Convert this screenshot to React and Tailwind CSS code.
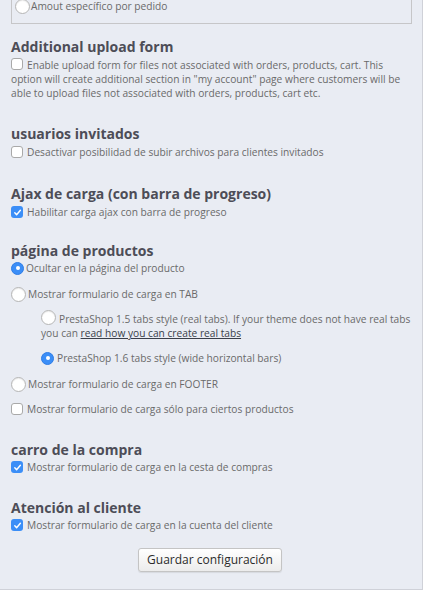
import React from "react";

const Radio = ({ checked }) =>
  checked ? (
    <span className="inline-flex flex-none w-[13px] h-[13px] rounded-full bg-[#3b8ef7] border border-[#2f7de6] items-center justify-center">
      <span className="w-[4px] h-[4px] rounded-full bg-white" />
    </span>
  ) : (
    <span className="inline-block flex-none w-[15px] h-[15px] rounded-full bg-white border border-[#b5b5b5] shadow-[inset_0_1px_1px_rgba(0,0,0,0.08)]" />
  );

const Checkbox = ({ checked }) =>
  checked ? (
    <span className="inline-flex flex-none w-[12px] h-[12px] rounded-[3px] bg-[#3b8ef7] items-center justify-center">
      <svg width="9" height="9" viewBox="0 0 10 10">
        <path d="M2 5.3l2 2.1L8.2 2.6" fill="none" stroke="white" strokeWidth="1.6" strokeLinecap="round" strokeLinejoin="round" />
      </svg>
    </span>
  ) : (
    <span className="inline-block flex-none w-[12px] h-[12px] rounded-[3px] bg-white border border-[#a9a9a9]" />
  );

const Heading = ({ children, className = "" }) => (
  <h3 className={`text-[14px] leading-[20px] font-bold text-[#4d4d57] ${className}`}>{children}</h3>
);

const Row = ({ control, children, className = "" }) => (
  <div className={`flex items-center gap-[2px] h-[14px] ${className}`}>
    {control}
    <span>{children}</span>
  </div>
);

// keeps a control inline in wrapped text without growing the line box
const InlineControl = ({ children, w, top, className = "" }) => (
  <span className={`relative inline-block h-[8px] align-baseline ${w} ${className}`}>
    <span className={`absolute left-0 ${top}`}>{children}</span>
  </span>
);

export default function App() {
  return (
    <div className="min-h-[609px] bg-white" style={{ fontFamily: "'Open Sans', 'Liberation Sans', sans-serif" }}>
      <div className="w-[423px] bg-[#e9ecf3] border-r border-b border-[#cfd1d8] pl-[11px] pr-[11px] pb-[17px] text-[10.2px] leading-[14px] text-[#6a6a6a] overflow-hidden">
        <div className="mt-[-12px] w-[401px] h-[36px] border border-[#c6c6c8] pt-[10px] pl-[3px]">
          <div className="flex items-center gap-[1px] h-[14px]">
            <Radio />
            <span>Amout específico por pedido</span>
          </div>
        </div>

        <Heading className="mt-[13px]">Additional upload form</Heading>
        <p className="mt-[1px] w-[400px]">
          <InlineControl w="w-[12px]" top="top-[-3px]" className="mr-[4px]">
            <Checkbox />
          </InlineControl>
          Enable upload form for files not associated with orders, products, cart. This option will create additional section in "my account" page where customers will be able to upload files not associated with orders, products, cart etc.
        </p>

        <Heading className="mt-[24px]">usuarios invitados</Heading>
        <Row className="mt-[1px] gap-[4px]" control={<Checkbox />}>
          Desactivar posibilidad de subir archivos para clientes invitados
        </Row>

        <Heading className="mt-[25px]">Ajax de carga (con barra de progreso)</Heading>
        <Row className="mt-[1px] gap-[4px]" control={<Checkbox checked />}>
          Habilitar carga ajax con barra de progreso
        </Row>

        <Heading className="mt-[22px]">página de productos</Heading>
        <Row className="mt-0" control={<Radio checked />}>
          Ocultar en la página del producto
        </Row>
        <Row className="mt-[12px]" control={<Radio />}>
          Mostrar formulario de carga en TAB
        </Row>
        <div className="pl-[30px]">
          <p className="mt-[11px] w-[372px]">
            <InlineControl w="w-[15px]" top="top-[-5px]" className="mr-[3px]">
              <Radio />
            </InlineControl>
            PrestaShop 1.5 tabs style (real tabs). If your theme does not have real tabs you can{" "}
            <a href="#" className="underline text-[#3a3f4a]">read how you can create real tabs</a>
          </p>
          <Row className="mt-[11px] gap-[3px]" control={<Radio checked />}>
            PrestaShop 1.6 tabs style (wide horizontal bars)
          </Row>
        </div>
        <Row className="mt-[12px]" control={<Radio />}>
          Mostrar formulario de carga en FOOTER
        </Row>
        <Row className="mt-[11px] gap-[4px]" control={<Checkbox />}>
          Mostrar formulario de carga sólo para ciertos productos
        </Row>

        <Heading className="mt-[24px]">carro de la compra</Heading>
        <Row className="mt-0 gap-[4px]" control={<Checkbox checked />}>
          Mostrar formulario de carga en la cesta de compras
        </Row>

        <Heading className="mt-[24px]">Atención al cliente</Heading>
        <Row className="mt-0 gap-[4px]" control={<Checkbox checked />}>
          Mostrar formulario de carga en la cuenta del cliente
        </Row>

        <div className="flex justify-center mt-[16px] pr-[2px]">
          <button className="w-[144px] h-[24px] rounded-[3px] border border-[#c4c4c4] bg-gradient-to-b from-white to-[#ececec] text-[12px] text-[#2b2b2b] shadow-[0_1px_1px_rgba(0,0,0,0.08)]">
            Guardar configuración
          </button>
        </div>
      </div>
    </div>
  );
}
